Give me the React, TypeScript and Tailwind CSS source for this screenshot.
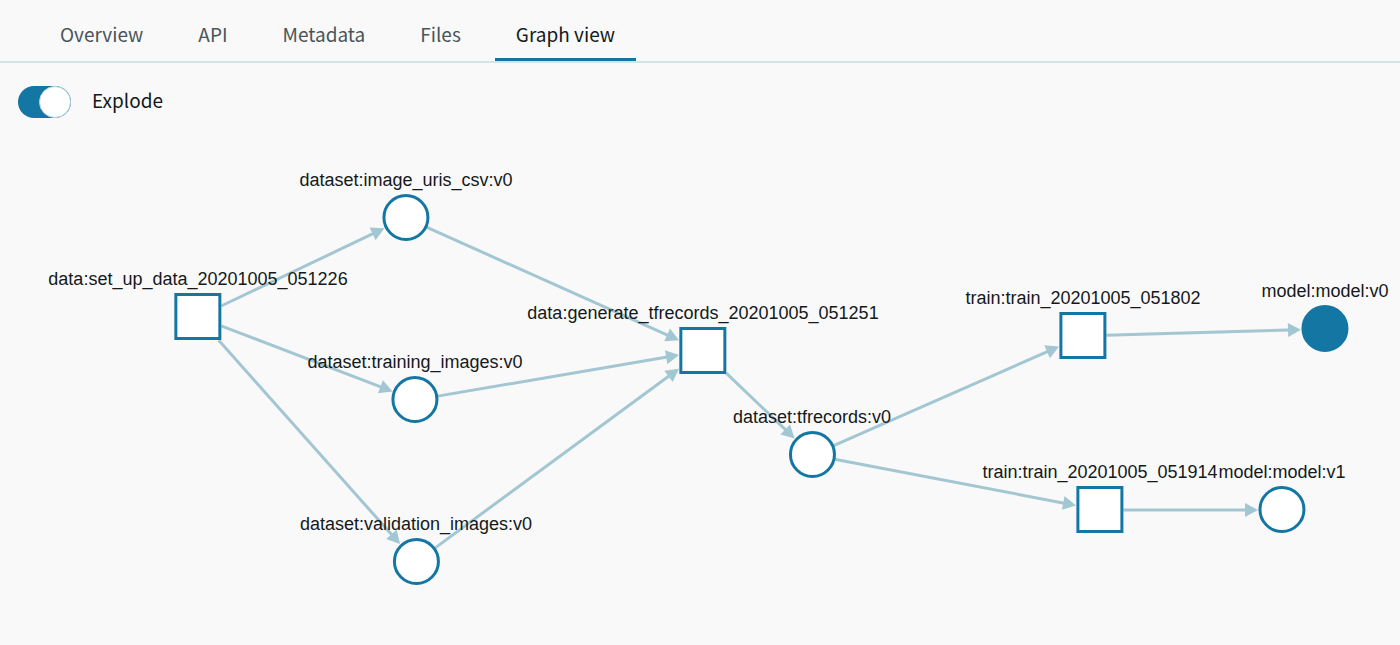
import { useState } from "react";

type Shape = "square" | "circle";

interface GraphNode {
  id: string;
  label: string;
  shape: Shape;
  x: number;
  y: number;
  filled?: boolean;
}

const TABS = ["Overview", "API", "Metadata", "Files", "Graph view"];

// Node centres, measured from the canvas's top left corner.
const NODES: GraphNode[] = [
  { id: "setup", label: "data:set_up_data_20201005_051226", shape: "square", x: 198, y: 177 },
  { id: "uris", label: "dataset:image_uris_csv:v0", shape: "circle", x: 406, y: 78 },
  { id: "training", label: "dataset:training_images:v0", shape: "circle", x: 415, y: 260 },
  { id: "validation", label: "dataset:validation_images:v0", shape: "circle", x: 416, y: 422 },
  { id: "generate", label: "data:generate_tfrecords_20201005_051251", shape: "square", x: 703, y: 211 },
  { id: "tfrecords", label: "dataset:tfrecords:v0", shape: "circle", x: 812, y: 315 },
  { id: "train1802", label: "train:train_20201005_051802", shape: "square", x: 1083, y: 196 },
  { id: "train1914", label: "train:train_20201005_051914", shape: "square", x: 1100, y: 370 },
  { id: "model0", label: "model:model:v0", shape: "circle", x: 1325, y: 189, filled: true },
  { id: "model1", label: "model:model:v1", shape: "circle", x: 1282, y: 370 },
];

const EDGES: [string, string][] = [
  ["setup", "uris"],
  ["setup", "training"],
  ["setup", "validation"],
  ["uris", "generate"],
  ["training", "generate"],
  ["validation", "generate"],
  ["generate", "tfrecords"],
  ["tfrecords", "train1802"],
  ["tfrecords", "train1914"],
  ["train1802", "model0"],
  ["train1914", "model1"],
];

const REACH = 24;
const ARROW = 13;

const byId = (id: string) => NODES.find((node) => node.id === id)!;

// Distance from a node's centre to its outline along a unit direction.
function outline(shape: Shape, ux: number, uy: number) {
  return shape === "circle" ? REACH : REACH / Math.max(Math.abs(ux), Math.abs(uy));
}

function Edge({ from, to }: { from: GraphNode; to: GraphNode }) {
  const dx = to.x - from.x;
  const dy = to.y - from.y;
  const length = Math.hypot(dx, dy);
  const ux = dx / length;
  const uy = dy / length;
  const start = outline(from.shape, ux, uy) - 1;
  const end = length - outline(to.shape, ux, uy);
  const at = (along: number, side = 0) =>
    `${from.x + ux * along - uy * side},${from.y + uy * along + ux * side}`;

  return (
    <g>
      <path d={`M${at(start)} L${at(end - ARROW + 1)}`} stroke="#a3c6d3" strokeWidth={3} />
      <path d={`M${at(end)} L${at(end - ARROW, 7)} L${at(end - ARROW, -7)} Z`} fill="#a3c6d3" />
    </g>
  );
}

function Node({ node }: { node: GraphNode }) {
  return (
    <div
      className="absolute flex -translate-x-1/2 flex-col items-center gap-1"
      style={{ left: node.x, top: node.y - 48 }}
    >
      <span className="text-lg/5 whitespace-nowrap text-[#14191b]">{node.label}</span>
      <div
        className={`size-[47px] border-3 border-[#1476a2] ${
          node.shape === "circle" ? "rounded-full" : ""
        } ${node.filled ? "bg-[#1476a2]" : "bg-white"}`}
      />
    </div>
  );
}

export default function App() {
  const [active, setActive] = useState("Graph view");
  const [exploded, setExploded] = useState(true);

  return (
    <div className="flex min-h-screen flex-col overflow-x-hidden bg-[#f9f9f9] font-['Noto_Sans_CJK_JP',sans-serif] text-[19px]">
      <header className="border-b-2 border-[#d3e4e4]">
        <div role="tablist" className="flex gap-[13px] pl-[39px]">
          {TABS.map((tab) => (
            <button
              key={tab}
              type="button"
              role="tab"
              aria-selected={tab === active}
              onClick={() => setActive(tab)}
              className={`border-b-3 px-[21px] pt-5 pb-2.5 leading-7 ${
                tab === active
                  ? "border-[#1476a2] text-[#14191b]"
                  : "border-transparent text-[#4a5558]"
              }`}
            >
              {tab}
            </button>
          ))}
        </div>
      </header>

      <label className="flex items-start gap-[21px] self-start px-[18px] pt-[23px] pb-[22px] text-[#14191b]">
        <span className="flex">
          <input
            type="checkbox"
            role="switch"
            checked={exploded}
            onChange={(event) => setExploded(event.target.checked)}
            className="peer sr-only"
          />
          <span className="flex h-8 w-[53px] rounded-full bg-[#b9c9cf] peer-checked:justify-end peer-checked:bg-[#1476a2]">
            <span className="size-8 rounded-full border border-[#b9d3de] bg-white" />
          </span>
        </span>
        <span className="leading-7">Explode</span>
      </label>

      <main className="relative min-h-[500px] w-full grow font-['Liberation_Sans',sans-serif]">
        <svg className="absolute inset-0 size-full overflow-visible" fill="none" aria-hidden="true">
          {EDGES.map(([from, to]) => (
            <Edge key={`${from}-${to}`} from={byId(from)} to={byId(to)} />
          ))}
        </svg>
        {NODES.map((node) => (
          <Node key={node.id} node={node} />
        ))}
      </main>
    </div>
  );
}
